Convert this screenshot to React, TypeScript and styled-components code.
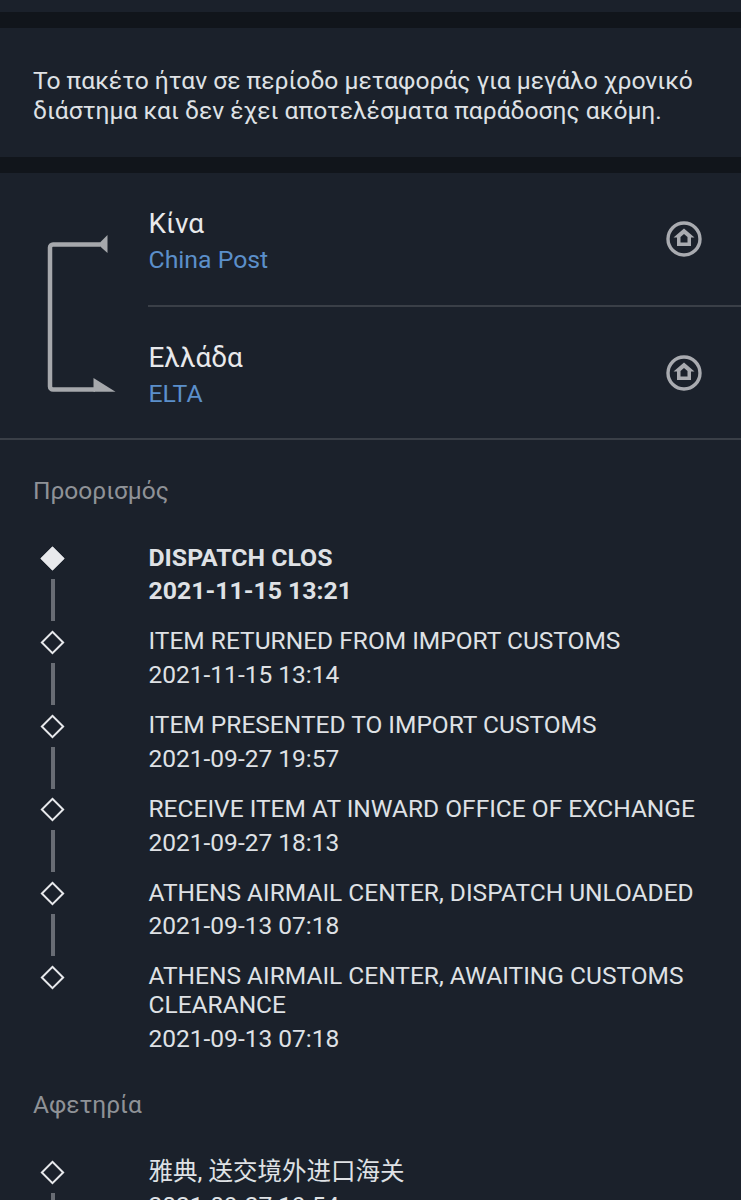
import React from "react";
import styled, { createGlobalStyle } from "styled-components";

const GlobalStyle = createGlobalStyle`
  html, body {
    margin: 0;
    padding: 0;
    background: #1b212b;
    overflow: hidden;
  }
`;

const Page = styled.div`
  width: 741px;
  height: 1200px;
  overflow: hidden;
  background: #1b212b;
  color: #e4e6ea;
  font-family: Roboto, "Noto Sans CJK SC", sans-serif;
`;

const Band = styled.div`
  height: 16px;
  background: #11151b;
`;

const TopStrip = styled.div`
  height: 12px;
`;

const Notice = styled.p`
  margin: 0;
  height: 129px;
  box-sizing: border-box;
  padding: 38px 33px 0;
  font-size: 24.6px;
  line-height: 30px;
  color: #dfe1e5;
`;

const Route = styled.section`
  display: grid;
  grid-template-columns: 148px 1fr;
  border-bottom: 2px solid #3a3f47;
`;

const RouteArrow = styled.div`
  display: flex;
  justify-content: flex-start;
  padding: 60px 0 0 45.5px;
`;

const Stops = styled.div`
  display: flex;
  flex-direction: column;
`;

const Stop = styled.div<{ $divided?: boolean }>`
  height: ${({ $divided }) => ($divided ? "134px" : "131px")};
  box-sizing: border-box;
  display: flex;
  justify-content: space-between;
  padding: 33px 39.5px 0 0.5px;
  border-bottom: ${({ $divided }) => ($divided ? "2px solid #3a3f47" : "none")};
`;

const Country = styled.div`
  font-size: 27.9px;
  line-height: 36px;
  color: #e8e9ec;
`;

const Carrier = styled.div`
  font-size: 24.8px;
  line-height: 36px;
  color: #5b8fca;
`;

const HomeButton = styled.div`
  padding-top: 15px;
  line-height: 0;
`;

const SectionTitle = styled.h3<{ $top: number }>`
  margin: 0;
  padding: ${({ $top }) => $top}px 33px 0;
  font-size: 24.5px;
  line-height: 30px;
  font-weight: 400;
  color: #8f9297;
`;

const Timeline = styled.div`
  display: flex;
  flex-direction: column;
  padding-top: 36.5px;
`;

const Event = styled.div`
  display: grid;
  grid-template-columns: 148.5px 1fr;
  padding-bottom: 21px;
`;

const Rail = styled.div`
  position: relative;
  height: 100%;
`;

const Marker = styled.span<{ $filled?: boolean }>`
  position: absolute;
  left: 44px;
  top: 7.5px;
  width: 17px;
  height: 17px;
  box-sizing: border-box;
  transform: rotate(45deg);
  border: 2px solid #e8e9ec;
  background: ${({ $filled }) => ($filled ? "#e8e9ec" : "transparent")};
`;

const Connector = styled.span`
  position: absolute;
  left: 51px;
  top: 36.5px;
  width: 4px;
  height: 42px;
  background: #686c74;
`;

const EventText = styled.div<{ $strong?: boolean }>`
  font-size: ${({ $strong }) => ($strong ? "24.8px" : "24.5px")};
  line-height: 29px;
  font-weight: ${({ $strong }) => ($strong ? 700 : 400)};
  color: #dfe1e5;
  padding-right: 30px;
`;

const EventDate = styled.div`
  margin-top: 4.8px;
`;

const RouteIcon = () => (
  <svg width="72" height="160" viewBox="0 0 72 160" fill="none">
    <path
      d="M54 11.5H7a3 3 0 0 0-3 3v139a3 3 0 0 0 3 3h42"
      stroke="#a6a8ac"
      strokeWidth="4.5"
    />
    <path d="M61.5 2V20L52 11.5Z" fill="#a6a8ac" />
    <path d="M47.5 145L69.5 158.8H47.5Z" fill="#a6a8ac" />
  </svg>
);

const HomeIcon = () => (
  <svg width="36" height="36" viewBox="0 0 36 36" fill="none">
    <circle cx="18" cy="18" r="16" stroke="#a9abb0" strokeWidth="3.4" />
    <path
      d="M18 7.5L28.5 16.5H25V25H11V16.5H7.5Z M14.5 16V21.5H21.5V16L18 13Z"
      fill="#a9abb0"
      fillRule="evenodd"
    />
  </svg>
);

type TrackEvent = {
  title: string;
  date: string;
};

const destination: TrackEvent[] = [
  { title: "DISPATCH CLOS", date: "2021-11-15 13:21" },
  { title: "ITEM RETURNED FROM IMPORT CUSTOMS", date: "2021-11-15 13:14" },
  { title: "ITEM PRESENTED TO IMPORT CUSTOMS", date: "2021-09-27 19:57" },
  { title: "RECEIVE ITEM AT INWARD OFFICE OF EXCHANGE", date: "2021-09-27 18:13" },
  { title: "ATHENS AIRMAIL CENTER, DISPATCH UNLOADED", date: "2021-09-13 07:18" },
  { title: "ATHENS AIRMAIL CENTER, AWAITING CUSTOMS CLEARANCE", date: "2021-09-13 07:18" },
];

const origin: TrackEvent[] = [
  { title: "雅典, 送交境外进口海关", date: "2021-09-27 19:54" },
];

const App = () => {
  return (
    <Page>
      <GlobalStyle />
      <TopStrip />
      <Band />
      <Notice>
        Το πακέτο ήταν σε περίοδο μεταφοράς για μεγάλο χρονικό διάστημα και δεν έχει
        αποτελέσματα παράδοσης ακόμη.
      </Notice>
      <Band />
      <Route>
        <RouteArrow>
          <RouteIcon />
        </RouteArrow>
        <Stops>
          <Stop $divided>
            <div>
              <Country>Κίνα</Country>
              <Carrier>China Post</Carrier>
            </div>
            <HomeButton>
              <HomeIcon />
            </HomeButton>
          </Stop>
          <Stop>
            <div>
              <Country>Ελλάδα</Country>
              <Carrier>ELTA</Carrier>
            </div>
            <HomeButton>
              <HomeIcon />
            </HomeButton>
          </Stop>
        </Stops>
      </Route>
      <SectionTitle $top={36}>Προορισμός</SectionTitle>
      <Timeline>
        {destination.map((item, i) => (
          <Event key={i}>
            <Rail>
              <Marker $filled={i === 0} />
              {i < destination.length - 1 && <Connector />}
            </Rail>
            <EventText $strong={i === 0}>
              {item.title}
              <EventDate>{item.date}</EventDate>
            </EventText>
          </Event>
        ))}
      </Timeline>
      <SectionTitle $top={16}>Αφετηρία</SectionTitle>
      <Timeline>
        {origin.map((item, i) => (
          <Event key={i}>
            <Rail>
              <Marker />
              <Connector />
            </Rail>
            <EventText>
              {item.title}
              <EventDate>{item.date}</EventDate>
            </EventText>
          </Event>
        ))}
      </Timeline>
    </Page>
  );
};

export default App;
